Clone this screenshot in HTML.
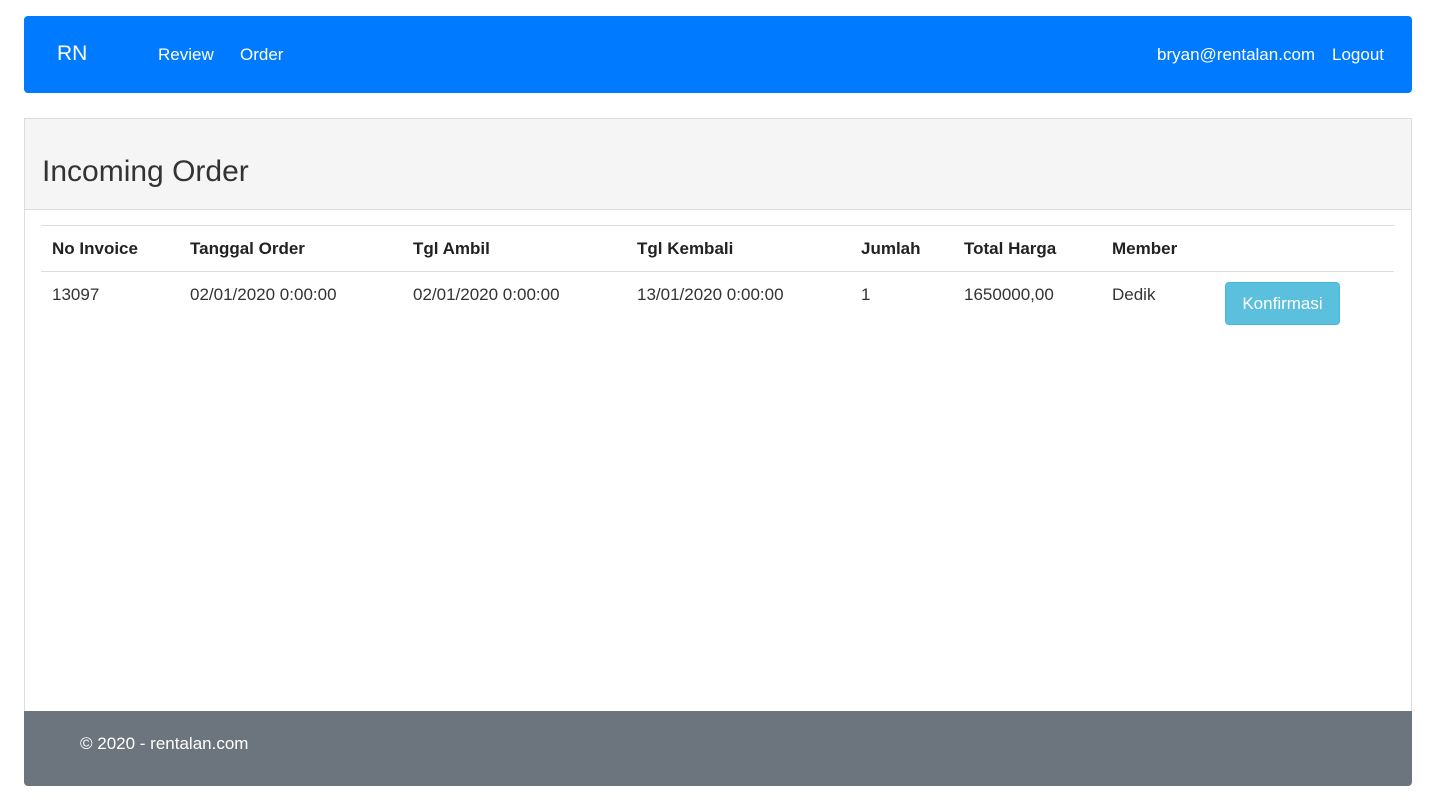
<!DOCTYPE html>
<html><head><style>
body{margin:0;background:#fff;font-family:"Liberation Sans",Arial,sans-serif;color:#333;font-size:16px}
.nav{position:absolute;left:24px;top:16px;width:1388px;height:77px;background:#007bff;border-radius:4px;color:#fff}
.nav span{position:absolute;top:29px;font-size:17px}
.panel{position:absolute;left:24px;top:118px;width:1386px;height:592px;border:1px solid #ddd;border-bottom:none}
.ph{height:90px;background:#f5f5f5;border-bottom:1px solid #ddd;position:relative}
.ph h1{position:absolute;left:17px;top:36px;margin:0;font-weight:normal;font-size:30px;color:#333}
.tl{position:absolute;left:41px;width:1353px;height:1px;background:#ddd}
.c{position:absolute;font-size:17px;white-space:nowrap}
.h{font-weight:bold;color:#222}
.btn{position:absolute;left:1225px;top:282px;width:115px;height:43px;background:#5bc0de;border:1px solid #46b8da;border-radius:4px;color:#fff;font-size:17px;text-align:center;line-height:41px;box-sizing:border-box}
.foot{position:absolute;left:24px;top:711px;width:1388px;height:75px;background:#6c757d;color:#fff;border-radius:0 0 4px 4px}
</style></head><body>
<div class="nav">
<span style="left:33px;font-size:21px;top:26px">RN</span>
<span style="left:134px">Review</span>
<span style="left:216px">Order</span>
<span style="left:1133px">bryan@rentalan.com</span>
<span style="left:1308px">Logout</span>
</div>
<div class="panel"><div class="ph"><h1>Incoming Order</h1></div></div>
<div class="tl" style="top:225px"></div>
<div class="tl" style="top:271px"></div>
<div class="c h" style="left:52px;top:239px">No Invoice</div>
<div class="c h" style="left:190px;top:239px">Tanggal Order</div>
<div class="c h" style="left:413px;top:239px">Tgl Ambil</div>
<div class="c h" style="left:637px;top:239px">Tgl Kembali</div>
<div class="c h" style="left:861px;top:239px">Jumlah</div>
<div class="c h" style="left:964px;top:239px">Total Harga</div>
<div class="c h" style="left:1112px;top:239px">Member</div>
<div class="c" style="left:52px;top:285px">13097</div>
<div class="c" style="left:190px;top:285px">02/01/2020 0:00:00</div>
<div class="c" style="left:413px;top:285px">02/01/2020 0:00:00</div>
<div class="c" style="left:637px;top:285px">13/01/2020 0:00:00</div>
<div class="c" style="left:861px;top:285px">1</div>
<div class="c" style="left:964px;top:285px">1650000,00</div>
<div class="c" style="left:1112px;top:285px">Dedik</div>
<div class="btn">Konfirmasi</div>
<div class="foot"><span style="position:absolute;left:56px;top:23px;font-size:17px">© 2020 - rentalan.com</span></div>
</body></html>
